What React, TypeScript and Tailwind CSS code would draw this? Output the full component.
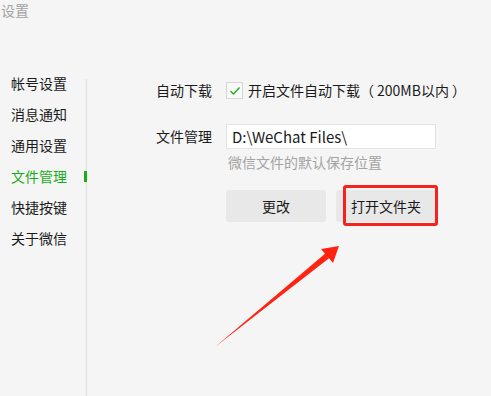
import React from 'react';

const menu = ['帐号设置', '消息通知', '通用设置', '文件管理', '快捷按键', '关于微信'];

export default function App() {
    return (
        <div
            className="relative w-[491px] h-[396px] overflow-hidden bg-[#f5f5f5] text-[14px] text-[#1a1a1a]"
            style={{ fontFamily: '"Noto Sans CJK SC", "Noto Sans", sans-serif' }}
        >
            <div className="pl-[1px] leading-[20px] text-[#a3a3a3]">设置</div>

            <div className="flex h-[328px] mt-[48px]">
                {/* Sidebar */}
                <div className="w-[85px] flex flex-col">
                    {menu.map((m) => (
                        <div
                            key={m}
                            className={`relative h-[31px] leading-[31px] pl-[11px] ${m === '文件管理' ? 'text-[#1aad19]' : ''}`}
                        >
                            {m}
                            {m === '文件管理' && (
                                <span className="absolute right-[-2px] top-[10px] w-[3px] h-[11px] bg-[#1aad19]" />
                            )}
                        </div>
                    ))}
                </div>
                <div className="w-[2px] mt-[11px] bg-[#e2e2e2] border-l border-[#f0f0f0]" />

                {/* Content */}
                <div className="flex flex-col pl-[69px] pt-[14px]">
                    <div className="flex items-center h-[17px]">
                        <span className="w-[70px]">自动下载</span>
                        <span className="w-[17px] h-[17px] border border-[#d6d6d6] bg-[#f9f9f9] flex items-center justify-center">
                            <svg width="12" height="10" viewBox="0 0 12 10" fill="none">
                                <path d="M1.5 5 L4.5 8 L10.5 1.5" stroke="#1aad19" strokeWidth="1.3" />
                            </svg>
                        </span>
                        <span className="ml-[5px]">
                            开启文件自动下载<span className="mr-[3px]">（</span>200MB以内<span className="ml-[3px]">）</span>
                        </span>
                    </div>

                    <div className="flex items-center mt-[25px]">
                        <span className="w-[70px]">文件管理</span>
                        <div className="w-[210px] h-[25px] bg-white border border-[#e3e3e3] pl-[5px] leading-[23px] text-[15px]">
                            D:\WeChat Files\
                        </div>
                    </div>
                    <div className="ml-[72px] mt-[3px] leading-[20px] text-[#a3a3a3]">微信文件的默认保存位置</div>

                    <div className="flex gap-[10px] ml-[70px] mt-[18px]">
                        <button className="w-[100px] h-[32px] rounded-[3px] bg-[#e8e8e8]">更改</button>
                        <button className="w-[100px] h-[32px] rounded-[3px] bg-[#e8e8e8]">打开文件夹</button>
                    </div>
                </div>
            </div>

            {/* annotation */}
            <div className="absolute left-[343px] top-[185px] w-[95px] h-[41px] border-[3px] border-[#f5231b] rounded-[3px]" />
            <svg className="absolute left-0 top-0" width="491" height="396" viewBox="0 0 491 396">
                <polygon
                    points="215,347 325,253.7 321,249 339,246 333,263 329,258.3"
                    fill="#ff2412"
                />
            </svg>
        </div>
    );
}
